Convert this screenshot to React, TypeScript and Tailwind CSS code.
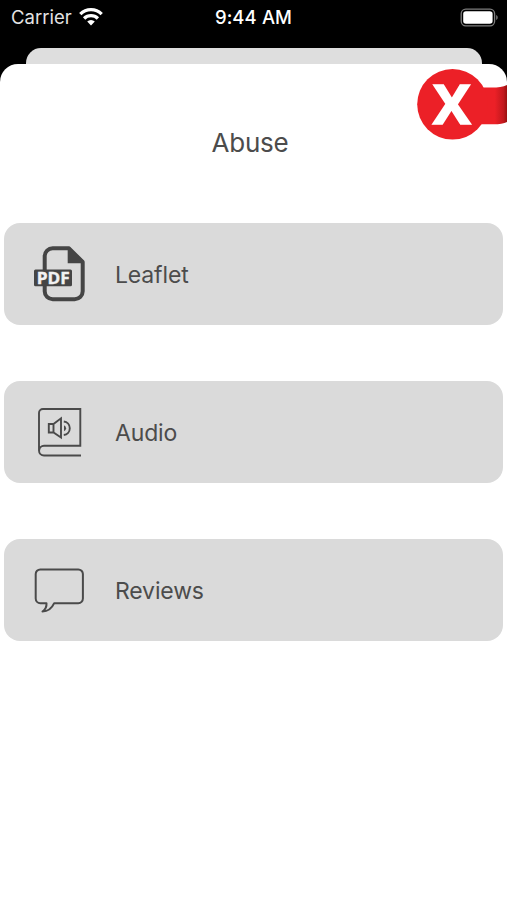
import type { ReactNode } from 'react'

function WifiIcon() {
  return (
    <svg width="24" height="18" viewBox="0 0 24 18" fill="none" stroke="#fff" strokeWidth="3.3">
      <path d="M1.3 6.1a15.2 15.2 0 0 1 21.4 0" />
      <path d="M5.1 10.5a9.8 9.8 0 0 1 13.8 0" />
      <path d="M12 17.4 8.2 13.600a5.400 5.400 0 0 1 7.600 0z" fill="#fff" stroke="none" />
    </svg>
  )
}

function BatteryIcon() {
  return (
    <svg width="38" height="19" viewBox="0 0 38 19" fill="none">
      <rect x="1.2" y="1.2" width="33.4" height="16.6" rx="4.6" stroke="#7d7d7d" strokeWidth="1.3" />
      <rect x="3.2" y="3.2" width="29.4" height="12.6" rx="2.8" fill="#fff" />
      <path d="M36.2 7v5c1-.4 1.5-1.4 1.5-2.5s-.5-2.100-1.500-2.500z" fill="#7d7d7d" />
    </svg>
  )
}

function CloseTab() {
  return (
    <svg className="overflow-visible" width="91" height="72" viewBox="0 0 91 72">
      <defs>
        <linearGradient id="tab" x1="0" x2="1" y1="0" y2="0">
          <stop offset="0.65" stopColor="#ec2027" />
          <stop offset="0.9" stopColor="#c1181d" />
          <stop offset="1" stopColor="#98110f" />
        </linearGradient>
      </defs>
      <path d="M56 19.500h20c6 0 11-.6 15-2.500v37c-3 1.500-8 2.300-13 2.300H56z" fill="url(#tab)" />
      <circle cx="36.500" cy="36.300" r="35.300" fill="#ec2027" />
      <text
        x="17"
        y="55.600"
        textLength="37.500"
        lengthAdjust="spacingAndGlyphs"
        fill="#fff"
        stroke="#fff"
        strokeWidth="1.600"
        fontFamily="'Open Sans', sans-serif"
        fontWeight="700"
        fontSize="53"
      >
        X
      </text>
    </svg>
  )
}

function PdfIcon() {
  return (
    <svg width="60" height="60" viewBox="0 0 60 60" fill="none">
      <path
        d="M12.700 28V12.300a8 8 0 0 1 8-8H37L50.700 18v29.300a8 8 0 0 1-8 8h-22a8 8 0 0 1-8-8V40"
        stroke="#454545"
        strokeWidth="4"
        strokeLinejoin="round"
      />
      <path d="M35.700 4v15.300h15.500V17L38 4z" fill="#454545" />
      <rect x="2" y="25.500" width="38" height="16.700" rx="1.500" fill="#454545" />
      <text
        x="4.800"
        y="39.900"
        textLength="33"
        lengthAdjust="spacingAndGlyphs"
        fill="#f2f2f2"
        stroke="#f2f2f2"
        strokeWidth="0.400"
        fontFamily="'Open Sans', sans-serif"
        fontWeight="700"
        fontSize="16.800"
      >
        PDF
      </text>
    </svg>
  )
}

function AudioBookIcon() {
  return (
    <svg width="60" height="60" viewBox="0 0 60 60" fill="none" stroke="#4a4a4a" strokeWidth="1.900">
      <path d="M49 53.500H12a5 5 0 0 1-5-5V11a4 4 0 0 1 4-4h37.300v36.800H12a4.800 4.800 0 0 0-4.800 4.800" />
      <path d="M16.800 22h4.700L29 16.300v19.200L21.500 30.500h-4.700zM21.500 22v8.500" />
      <path d="M31.800 19.500a6.800 6.800 0 0 1 0 13.500" />
      <path d="M32 23.200a3.200 3.200 0 0 1 0 6z" fill="#4a4a4a" stroke="none" />
    </svg>
  )
}

function ReviewIcon() {
  return (
    <svg width="60" height="60" viewBox="0 0 60 60" fill="none" stroke="#4a4a4a" strokeWidth="2" strokeLinejoin="round">
      <path d="M8.300 9.400h38a4.600 4.600 0 0 1 4.600 4.600v24.600a4.600 4.600 0 0 1-4.600 4.600H22.200c-2 4.400-5.500 8.300-11.700 8.300 2.800-2 4.300-4.300 4-8.300H8.300a4.600 4.600 0 0 1-4.600-4.600V14a4.600 4.600 0 0 1 4.600-4.600z" />
    </svg>
  )
}

interface MenuCardProps {
  icon: ReactNode
  label: string
}

function MenuCard({ icon, label }: MenuCardProps) {
  return (
    <button className="flex h-[102px] w-full items-center gap-[23px] rounded-2xl bg-[#dadada] pl-7 text-left">
      {icon}
      <span className="pt-0.5 text-[23px] leading-7 tracking-[-0.15px] text-[#4c4c4c]">{label}</span>
    </button>
  )
}

export default function App() {
  return (
    <div className="flex h-[900px] w-[507px] flex-col overflow-hidden bg-black font-['Inter',sans-serif]">
      <header className="grid h-12 shrink-0 grid-cols-3 pt-[7px] text-white">
        <div className="flex h-5 items-center gap-[7px] pl-[11px]">
          <span className="pt-0.5 text-[18.5px] text-[#e4e4e4]">Carrier</span>
          <WifiIcon />
        </div>
        <span className="flex h-5 items-center justify-center pt-0.5 text-[18.5px] font-medium tracking-[0.1px]">
          9:44 AM
        </span>
        <div className="flex h-5 items-center justify-end pr-[9px]">
          <BatteryIcon />
        </div>
      </header>

      <div className="ml-[26px] h-4 w-[456px] shrink-0 rounded-t-[15px] bg-[#dedede]" />

      <main className="relative flex-1 rounded-t-[18px] bg-white px-1 pt-[63px]">
        <h1 className="pr-[7px] text-center text-[26px] leading-8 tracking-[-0.25px] text-[#4c4c4c]">Abuse</h1>
        <button className="absolute right-0 top-1" aria-label="Close">
          <CloseTab />
        </button>
        <div className="mt-16 flex flex-col gap-14">
          <MenuCard icon={<PdfIcon />} label="Leaflet" />
          <MenuCard icon={<AudioBookIcon />} label="Audio" />
          <MenuCard icon={<ReviewIcon />} label="Reviews" />
        </div>
      </main>
    </div>
  )
}
